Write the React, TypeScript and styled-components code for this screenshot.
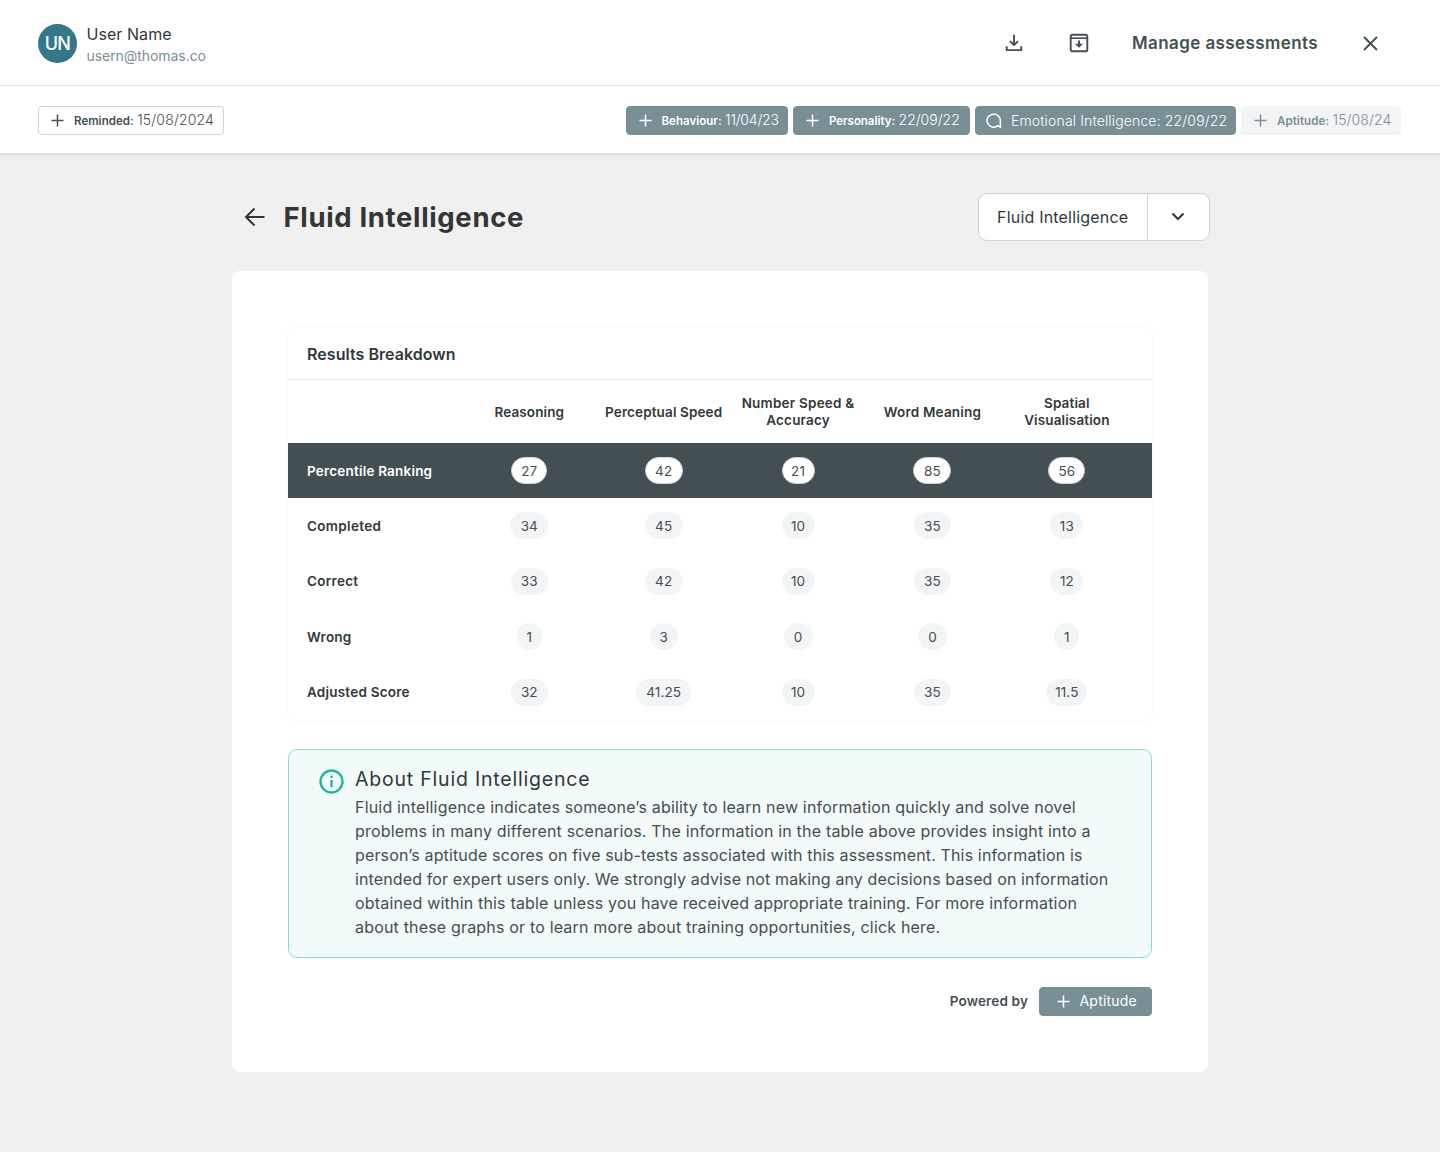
import React from 'react';
import styled, { createGlobalStyle } from 'styled-components';

const GlobalStyle = createGlobalStyle`
  *, *::before, *::after { box-sizing: border-box; }
  body {
    margin: 0;
    background: #f0f0f0;
    font-family: Inter, Roboto, "Liberation Sans", sans-serif;
    color: #333838;
  }
  button { font-family: inherit; padding: 0; border: 0; background: none; color: inherit; }
`;

const Page = styled.div`
  min-height: 1152px;
  background: #f0f0f0;
`;

const TopBar = styled.header`
  display: flex;
  align-items: center;
  justify-content: space-between;
  height: 86px;
  padding: 1px 58px 0 38px;
  background: #fff;
  border-bottom: 1px solid #e8ebeb;
`;

const User = styled.div`
  display: flex;
  align-items: center;
  gap: 9.5px;
`;

const Avatar = styled.div`
  display: grid;
  place-items: center;
  width: 39px;
  height: 39px;
  border-radius: 50%;
  background: #34778a;
  color: #fff;
  font-size: 18px;
  font-weight: 500;
  letter-spacing: -0.6px;
`;

const UserText = styled.div`
  display: flex;
  flex-direction: column;
  padding-top: 2px;
`;

const T = styled.span<{ $size: number; $weight?: number; $ls?: number; $color?: string; $lh?: number }>`
  display: block;
  white-space: nowrap;
  font-size: ${p => p.$size}px;
  font-weight: ${p => p.$weight ?? 400};
  letter-spacing: ${p => p.$ls ?? 0}px;
  line-height: ${p => p.$lh ?? 20}px;
  color: ${p => p.$color ?? 'inherit'};
`;

const Actions = styled.div`
  display: flex;
  align-items: center;
  color: #434f53;
`;

const IconButton = styled.button<{ $right?: number }>`
  display: grid;
  place-items: center;
  width: 24px;
  height: 24px;
  margin-right: ${p => p.$right ?? 0}px;
`;

const ManageButton = styled.button`
  width: 186px;
  margin-right: 40px;
  text-align: left;
`;

const TagBar = styled.div`
  display: flex;
  align-items: center;
  justify-content: space-between;
  height: 68px;
  padding: 2px 39px 0 38px;
  background: #fff;
  border-bottom: 1px solid #d8dbdb;
  box-shadow: 0 1px 3px rgba(60, 80, 85, 0.12);
`;

const TagGroup = styled.div`
  display: flex;
  gap: 5px;
`;

type Tone = 'outline' | 'solid' | 'muted';
const tones: Record<Tone, string> = {
  outline: 'background: #fff; color: #434f53; border: 1px solid #cdd4d6;',
  solid: 'background: #798f96; color: #fff; border: 1px solid #798f96;',
  muted: 'background: #f2f4f5; color: #798f96; border: 1px solid #f2f4f5;',
};

const Tag = styled.div<{ $tone: Tone; $width: number; $gap?: number; $pad?: number }>`
  display: flex;
  align-items: center;
  gap: ${p => p.$gap ?? 10}px;
  width: ${p => p.$width}px;
  height: 29.5px;
  padding-left: ${p => p.$pad ?? 12}px;
  border-radius: 4px;
  ${p => tones[p.$tone]}
  svg { flex: none; }
`;

const TagText = styled.div`
  display: flex;
  align-items: baseline;
  gap: 3.5px;
`;

const Main = styled.main`
  width: 977px;
  margin: 0 auto;
  padding-top: 39px;
`;

const Heading = styled.div`
  display: flex;
  align-items: center;
  justify-content: space-between;
  height: 48px;
  padding-left: 12px;
  margin-bottom: 30px;
`;

const TitleGroup = styled.div`
  display: flex;
  align-items: center;
  gap: 18px;
`;

const Title = styled.h1`
  margin: 0;
  font-size: 27.5px;
  line-height: 34px;
  font-weight: 700;
  letter-spacing: 0.65px;
  color: #333636;
  white-space: nowrap;
`;

const Select = styled.div`
  display: flex;
  width: 232px;
  height: 48px;
  margin-right: -1px;
  border: 1px solid #cdd4d6;
  border-radius: 9px;
  background: #fff;
`;

const SelectValue = styled.div`
  display: flex;
  align-items: center;
  width: 169px;
  padding-left: 18.5px;
  border-right: 1px solid #cdd4d6;
`;

const SelectToggle = styled.button`
  display: grid;
  place-items: center;
  flex: 1;
`;

const Card = styled.section`
  width: 976px;
  height: 801px;
  padding: 57px 56px 0;
  border-radius: 8px;
  background: #fff;
`;

const Results = styled.div`
  height: 392px;
  border-radius: 9px;
  box-shadow: 0 0 5px rgba(60, 80, 85, 0.07);
`;

const ResultsTitle = styled.div`
  display: flex;
  align-items: center;
  height: 52px;
  padding-left: 19.5px;
  border-bottom: 1px solid #e6e9e9;
`;

const Row = styled.div<{ $height: number; $dark?: boolean }>`
  display: grid;
  grid-template-columns: 174.6px repeat(5, 134.4px);
  align-items: center;
  height: ${p => p.$height}px;
  background: ${p => (p.$dark ? '#434f53' : 'transparent')};
  color: ${p => (p.$dark ? '#fff' : '#333838')};
`;

const HeadRow = styled(Row)`
  padding-top: 1px;
`;

const RowLabel = styled.div`
  padding-left: 19.5px;
`;

const Cell = styled.div`
  display: flex;
  flex-direction: column;
  align-items: center;
`;

const Score = styled.span<{ $dark?: boolean; $width: number }>`
  display: grid;
  place-items: center;
  width: ${p => p.$width}px;
  height: 27px;
  border-radius: 14px;
  border: 1px solid ${p => (p.$dark ? '#cdd4d6' : '#f2f4f5')};
  background: ${p => (p.$dark ? '#fff' : '#f2f4f5')};
  color: #434f53;
`;

const Info = styled.div`
  display: flex;
  gap: 11.5px;
  height: 209px;
  margin-top: 29px;
  padding: 17px 0 0 30px;
  border: 1px solid #83dfcf;
  border-radius: 9px;
  background: #f2fafa;
  > svg { margin-top: 2px; flex: none; }
`;

const InfoTitle = styled.h2`
  margin: 0 0 4px;
  font-size: 19.5px;
  line-height: 24px;
  font-weight: 400;
  letter-spacing: 0.8px;
  white-space: nowrap;
`;

const Powered = styled.div`
  display: flex;
  justify-content: flex-end;
  align-items: center;
  gap: 10.5px;
  margin-top: 28.5px;
`;

const Plus = () => (
  <svg width="13" height="13" viewBox="0 0 13 13" fill="none" stroke="currentColor" strokeWidth="1.5">
    <path d="M6.5 .5v12M.5 6.5h12" />
  </svg>
);

const Bubble = () => (
  <svg width="16" height="16" viewBox="0 0 16 16" fill="none" stroke="currentColor" strokeWidth="1.5" strokeLinejoin="round" strokeLinecap="round">
    <path d="M12 12.6A6.7 6.5 0 1 1 14.2 9.2L14.6 14.5Z" />
  </svg>
);

interface TagData { label: string; date: string; tone: Tone; width: number; labelLs: number; dateLs: number }

const DatedTag = ({ label, date, tone, width, labelLs, dateLs }: TagData) => (
  <Tag $tone={tone} $width={width}>
    <Plus />
    <TagText>
      <T $size={11.5} $weight={600} $ls={labelLs}>{label}</T>
      <T $size={14} $weight={300} $ls={dateLs}>{date}</T>
    </TagText>
  </Tag>
);

const columns: [string, number][][] = [
  [['Reasoning', 0.1]],
  [['Perceptual Speed', 0.12]],
  [['Number Speed &', 0.22], ['Accuracy', 0.2]],
  [['Word Meaning', 0.2]],
  [['Spatial', 0.15], ['Visualisation', 0.12]],
];

const rows: { label: string; ls: number; values: [string, number][] }[] = [
  { label: 'Percentile Ranking', ls: 0.2, values: [['27', 36], ['42', 38], ['21', 33], ['85', 38], ['56', 37]] },
  { label: 'Completed', ls: 0.33, values: [['34', 38], ['45', 38], ['10', 33], ['35', 37], ['13', 33]] },
  { label: 'Correct', ls: 0.3, values: [['33', 37], ['42', 38], ['10', 33], ['35', 37], ['12', 33]] },
  { label: 'Wrong', ls: 0.25, values: [['1', 25], ['3', 28], ['0', 29], ['0', 29], ['1', 25]] },
  { label: 'Adjusted Score', ls: 0.22, values: [['32', 37], ['41.25', 55], ['10', 33], ['35', 37], ['11.5', 41]] },
];

const about: [string, number][] = [
  ['Fluid intelligence indicates someone’s ability to learn new information quickly and solve novel', 0.18],
  ['problems in many different scenarios. The information in the table above provides insight into a', 0.185],
  ['person’s aptitude scores on five sub-tests associated with this assessment. This information is', 0.145],
  ['intended for expert users only. We strongly advise not making any decisions based on information', 0.13],
  ['obtained within this table unless you have received appropriate training. For more information', 0.18],
  ['about these graphs or to learn more about training opportunities, click here.', 0.178],
];

export default function App() {
  return (
    <Page>
      <GlobalStyle />
      <TopBar>
        <User>
          <Avatar>UN</Avatar>
          <UserText>
            <T $size={16} $lh={22} $ls={0.06}>User Name</T>
            <T $size={14} $lh={21} $ls={-0.06} $color="#798f96">usern@thomas.co</T>
          </UserText>
        </User>
        <Actions>
          <IconButton $right={41} aria-label="Download">
            <svg width="18" height="18" viewBox="0 0 18 18" fill="none" stroke="currentColor" strokeWidth="1.9">
              <path d="M9 .8v10M5 7.1 9 11.1l4-4M1.7 12.2v3.9h14.6v-3.9" strokeLinejoin="round" />
            </svg>
          </IconButton>
          <IconButton $right={41} aria-label="Archive">
            <svg width="20" height="20" viewBox="0 0 20 20" fill="none" stroke="currentColor" strokeWidth="1.9">
              <rect x="1.7" y="1.7" width="16.6" height="16.6" rx="1.9" />
              <path d="M2 5.2h16" strokeWidth="1.7" />
              <path d="M10 7.5v4.5" />
              <path d="M5.9 10.7h8.2L10 14.8Z" fill="currentColor" stroke="none" />
            </svg>
          </IconButton>
          <ManageButton>
            <T $size={17} $weight={600} $ls={0.41}>Manage assessments</T>
          </ManageButton>
          <IconButton aria-label="Close">
            <svg width="15" height="15" viewBox="0 0 15 15" fill="none" stroke="currentColor" strokeWidth="1.8">
              <path d="m1 1 13 13M14 1 1 14" />
            </svg>
          </IconButton>
        </Actions>
      </TopBar>
      <TagBar>
        <DatedTag label="Reminded:" date="15/08/2024" tone="outline" width={186} labelLs={0.03} dateLs={0.17} />
        <TagGroup>
          <DatedTag label="Behaviour:" date="11/04/23" tone="solid" width={162.500} labelLs={0.02} dateLs={-0.2} />
          <DatedTag label="Personality:" date="22/09/22" tone="solid" width={176.500} labelLs={-0.03} dateLs={0} />
          <Tag $tone="solid" $width={261.500} $gap={9} $pad={10.5}>
            <Bubble />
            <T $size={14} $weight={300} $ls={0.15}>Emotional Intelligence: 22/09/22</T>
          </Tag>
          <DatedTag label="Aptitude:" date="15/08/24" tone="muted" width={160} labelLs={0.08} dateLs={0.1} />
        </TagGroup>
      </TagBar>
      <Main>
        <Heading>
          <TitleGroup>
            <svg width="22" height="20" viewBox="0 0 22 20" fill="none" stroke="#333636" strokeWidth="2">
              <path d="M20.5 10H2.500M10.5 1.500 2 10l8.500 8.500" />
            </svg>
            <Title>Fluid Intelligence</Title>
          </TitleGroup>
          <Select>
            <SelectValue>
              <T $size={16} $ls={0.2}>Fluid Intelligence</T>
            </SelectValue>
            <SelectToggle aria-label="Choose report">
              <svg width="14" height="10" viewBox="0 0 14 10" fill="none" stroke="#333636" strokeWidth="2">
                <path d="m1.500 1.500 5.500 5.500L12.500 1.500" />
              </svg>
            </SelectToggle>
          </Select>
        </Heading>
        <Card>
          <Results>
            <ResultsTitle>
              <T $size={16} $weight={600} $ls={0.05}>Results Breakdown</T>
            </ResultsTitle>
            <HeadRow $height={63}>
              <span />
              {columns.map((lines, i) => (
                <Cell key={i}>
                  {lines.map(([text, ls]) => (
                    <T key={text} $size={13.5} $weight={600} $lh={17} $ls={ls}>{text}</T>
                  ))}
                </Cell>
              ))}
            </HeadRow>
            {rows.map((row, r) => (
              <Row key={row.label} $height={r ? 55.5 : 55} $dark={r === 0}>
                <RowLabel>
                  <T $size={13.5} $weight={600} $ls={row.ls}>{row.label}</T>
                </RowLabel>
                {row.values.map(([value, width], c) => (
                  <Cell key={c}>
                    <Score $dark={r === 0} $width={width}>
                      <T $size={13.5} $ls={0.1}>{value}</T>
                    </Score>
                  </Cell>
                ))}
              </Row>
            ))}
          </Results>
          <Info>
            <svg width="25" height="25" viewBox="0 0 25 25" fill="none" stroke="#1db5a0" strokeWidth="2.3">
              <circle cx="12.5" cy="12.5" r="11" />
              <path d="M12.5 11v7.2M12.5 6.5v2.5" />
            </svg>
            <div>
              <InfoTitle>About Fluid Intelligence</InfoTitle>
              {about.map(([line, ls]) => (
                <T key={line} $size={16} $lh={24} $ls={ls} $color="#434f53">{line}</T>
              ))}
            </div>
          </Info>
          <Powered>
            <T $size={13.5} $weight={600} $ls={0.15} $color="#434f53">Powered by</T>
            <Tag $tone="solid" $width={113} $pad={17}>
              <Plus />
              <T $size={14} $ls={0.2}>Aptitude</T>
            </Tag>
          </Powered>
        </Card>
      </Main>
    </Page>
  );
}
